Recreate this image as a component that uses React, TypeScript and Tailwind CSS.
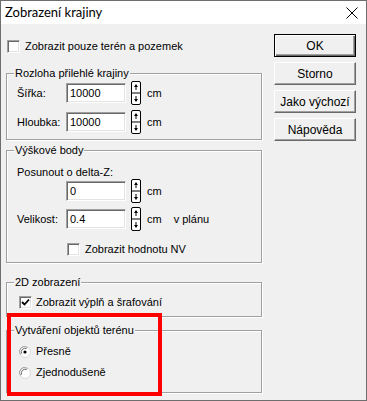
import React from 'react';

const Spinner: React.FC = () => (
  <svg width="10" height="24" viewBox="0 0 10 24" className="shrink-0">
    <rect x="0.5" y="0.5" width="9" height="23" rx="1.5" fill="#fff" stroke="#000" />
    <line x1="0.5" y1="12" x2="9.5" y2="12" stroke="#000" />
    <path d="M5 3 L3 6 H7 Z" fill="#000" />
    <line x1="5" y1="5" x2="5" y2="9" stroke="#000" />
    <path d="M5 21 L3 18 H7 Z" fill="#000" />
    <line x1="5" y1="15" x2="5" y2="19" stroke="#000" />
  </svg>
);

const CheckBox: React.FC<{ checked?: boolean }> = ({ checked }) => (
  <span className="w-[13px] h-[13px] shrink-0 bg-white border border-t-[#a0a0a0] border-l-[#a0a0a0] border-b-white border-r-white shadow-[inset_1px_1px_0_#696969,inset_-1px_-1px_0_#e3e3e3] flex items-center justify-center">
    {checked ? (
      <svg width="9" height="9" viewBox="0 0 9 9">
        <path d="M1 4 L3.5 6.5 L8 1.5" fill="none" stroke="#000" strokeWidth="1.8" />
      </svg>
    ) : null}
  </span>
);

const Radio: React.FC<{ checked?: boolean }> = ({ checked }) => (
  <svg width="12" height="12" viewBox="0 0 12 12" className="shrink-0">
    <circle cx="6" cy="6" r="5.5" fill="#fff" stroke="#d8d8d8" />
    <path d="M1.5 8.5 A5 5 0 0 1 8.5 1.5" fill="none" stroke="#a0a0a0" />
    <path d="M2.6 7.6 A3.8 3.8 0 0 1 7.6 2.6" fill="none" stroke="#696969" />
    {checked ? <circle cx="6" cy="6" r="1.6" fill="#000" /> : null}
  </svg>
);

const Input: React.FC<{ value: string }> = ({ value }) => (
  <div className="w-[60px] h-[20px] shrink-0 bg-white border border-t-[#a0a0a0] border-l-[#a0a0a0] border-b-white border-r-white shadow-[inset_1px_1px_0_#696969,inset_-1px_-1px_0_#e3e3e3] pl-[3px] flex items-center leading-none">
    {value}
  </div>
);

const Group: React.FC<{ label: string; className: string; children?: React.ReactNode }> = ({ label, className, children }) => (
  <div className={`relative border border-[#a0a0a0] shadow-[inset_1px_1px_0_#fff,1px_1px_0_#fff] ${className}`}>
    <span className="absolute -top-[7px] left-[7px] px-[1px] bg-[#f0f0f0] leading-[13px]">{label}</span>
    {children}
  </div>
);

const Button: React.FC<{ label: string; isDefault?: boolean }> = ({ label, isDefault }) => (
  <div
    className={`w-[82px] h-[23px] flex items-center justify-center bg-[#f0f0f0] text-[12px] ${
      isDefault
        ? 'border border-black shadow-[inset_1px_1px_0_#fff,inset_-1px_-1px_0_#696969,inset_-2px_-2px_0_#a0a0a0]'
        : 'border border-t-white border-l-white border-b-[#696969] border-r-[#696969] shadow-[inset_-1px_-1px_0_#a0a0a0]'
    }`}
  >
    {label}
  </div>
);

export default function App() {
  return (
    <div className="relative w-[367px] h-[401px] bg-[#f0f0f0] border border-[#6e6e6e] text-black text-[11px] font-['Liberation_Sans',Arial,sans-serif] overflow-hidden">
      <div className="h-[23px] bg-white flex items-center justify-between pl-[4px] pr-[8px]">
        <span className="text-[13px] font-['Lato',sans-serif]">Zobrazení krajiny</span>
        <svg width="12" height="12" viewBox="0 0 12 12">
          <path d="M0.5 0.5 L11.5 11.5 M11.5 0.5 L0.5 11.5" stroke="#000" strokeWidth="1" />
        </svg>
      </div>

      <div className="flex">
        <div className="w-[256px] ml-[5px] flex flex-col">
          <div className="mt-[16px] h-[13px] flex items-center">
            <span className="ml-[1px]"><CheckBox /></span>
            <span className="ml-[5px]">Zobrazit pouze terén a pozemek</span>
          </div>

          <Group label="Rozloha přilehlé krajiny" className="mt-[20px] h-[67px] pl-[10px] pt-[7px]">
            <div className="h-[24px] flex items-center">
              <span className="w-[49px]">Šířka:</span>
              <Input value="10000" />
              <span className="ml-[5px]"><Spinner /></span>
              <span className="ml-[6px]">cm</span>
            </div>
            <div className="mt-[5px] h-[24px] flex items-center">
              <span className="w-[49px]">Hloubka:</span>
              <Input value="10000" />
              <span className="ml-[5px]"><Spinner /></span>
              <span className="ml-[6px]">cm</span>
            </div>
          </Group>

          <Group label="Výškové body" className="mt-[10px] h-[113px] pl-[10px] pt-[15px]">
            <div className="leading-[13px]">Posunout o delta-Z:</div>
            <div className="h-[24px] flex items-center">
              <span className="w-[49px]" />
              <Input value="0" />
              <span className="ml-[5px]"><Spinner /></span>
              <span className="ml-[6px]">cm</span>
            </div>
            <div className="mt-[4px] h-[24px] flex items-center">
              <span className="w-[49px]">Velikost:</span>
              <Input value="0.4" />
              <span className="ml-[5px]"><Spinner /></span>
              <span className="ml-[6px]">cm</span>
              <span className="ml-[12px]">v plánu</span>
            </div>
            <div className="mt-[12px] h-[13px] flex items-center ml-[50px]">
              <CheckBox />
              <span className="ml-[5px]">Zobrazit hodnotu NV</span>
            </div>
          </Group>

          <Group label="2D zobrazení" className="mt-[19px] h-[35px] pl-[12px] pt-[13px]">
            <div className="h-[13px] flex items-center">
              <CheckBox checked />
              <span className="ml-[4px]">Zobrazit výplň a šrafování</span>
            </div>
          </Group>

          <Group label="Vytváření objektů terénu" className="mt-[13px] h-[63px] pl-[12px] pt-[14px]">
            <div className="h-[13px] flex items-center">
              <Radio checked />
              <span className="ml-[5px]">Přesně</span>
            </div>
            <div className="mt-[8px] h-[13px] flex items-center">
              <Radio />
              <span className="ml-[5px]">Zjednodušeně</span>
            </div>
          </Group>
        </div>

        <div className="ml-[12px] mt-[10px] flex flex-col gap-[5px]">
          <Button label="OK" isDefault />
          <Button label="Storno" />
          <Button label="Jako výchozí" />
          <Button label="Nápověda" />
        </div>
      </div>

      <div className="absolute left-[6px] top-[312px] w-[155px] h-[83px] border-4 border-[#ff0000]" />
    </div>
  );
}
